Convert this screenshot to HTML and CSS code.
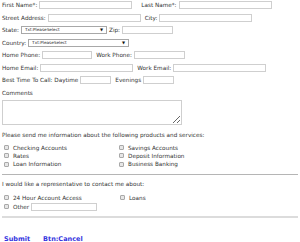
FILE: index.html
```html
<!DOCTYPE html>
<html lang="en">
<head>
  <meta charset="UTF-8">
  <title>Contact Request</title>
  <link rel="stylesheet" href="styles.css">
</head>
<body>
  <form class="contact-form">
    <!-- Name -->
    <div class="row">
      <label>First Name*:</label>
      <input type="text" class="field w-93">
      <label class="next far">Last Name*:</label>
      <input type="text" class="field w-93">
    </div>

    <!-- Address -->
    <div class="row">
      <label>Street Address:</label>
      <input type="text" class="field w-93">
      <label class="next">City:</label>
      <input type="text" class="field w-93">
    </div>

    <div class="row">
      <label>State:</label>
      <span class="select w-86">
        <select class="picker"><option>Txt:PleaseSelect</option></select>
      </span>
      <label class="near">Zip:</label>
      <input type="text" class="field w-51">
    </div>

    <div class="row">
      <label>Country:</label>
      <span class="select w-101">
        <select class="picker"><option>Txt:PleaseSelect</option></select>
      </span>
    </div>

    <!-- Phone / Email -->
    <div class="row">
      <label>Home Phone:</label>
      <input type="text" class="field w-50">
      <label class="next">Work Phone:</label>
      <input type="text" class="field w-51">
    </div>

    <div class="row">
      <label>Home Email:</label>
      <input type="text" class="field w-93">
      <label class="next">Work Email:</label>
      <input type="text" class="field w-93">
    </div>

    <div class="row">
      <label>Best Time To Call: Daytime</label>
      <input type="text" class="field w-31">
      <label class="next">Evenings</label>
      <input type="text" class="field w-31">
    </div>

    <div class="row">
      <label>Comments</label>
    </div>
    <textarea class="comments"></textarea>

    <!-- Products -->
    <p class="question">Please send me information about the following products and services:</p>
    <div class="options">
      <label class="option"><input type="checkbox"> Checking Accounts</label>
      <label class="option"><input type="checkbox"> Savings Accounts</label>
      <label class="option"><input type="checkbox"> Rates</label>
      <label class="option"><input type="checkbox"> Deposit Information</label>
      <label class="option"><input type="checkbox"> Loan Information</label>
      <label class="option"><input type="checkbox"> Business Banking</label>
    </div>

    <hr class="divider">

    <!-- Representative -->
    <p class="question">I would like a representative to contact me about:</p>
    <div class="options contact">
      <label class="option"><input type="checkbox"> 24 Hour Account Access</label>
      <label class="option"><input type="checkbox"> Loans</label>
      <label class="option other"><input type="checkbox"> Other <input type="text" class="field w-66"></label>
    </div>

    <hr class="divider light">

    <div class="actions">
      <a href="#" class="action">Submit</a>
      <a href="#" class="action">Btn:Cancel</a>
    </div>
  </form>
</body>
</html>
```

FILE: styles.css
```css
/* Base */
body {
  margin: 0;
  padding: 0 2px;
  font-family: "DejaVu Sans", Verdana, sans-serif;
  font-size: 5.7px;
  color: #333;
  background: #fff;
}

.contact-form {
  display: flex;
  flex-direction: column;
}

/* Rows */
.row {
  display: flex;
  align-items: center;
  height: 10px;
  margin-top: 2.5px;
  white-space: nowrap;
}

.row:first-child {
  margin-top: 0;
}

.row label {
  margin-right: 2px;
}

.row .next {
  margin-left: 4px;
}

.row .far {
  margin-left: 9px;
}

.row .near {
  margin-left: 2px;
}

/* Inputs */
.field {
  box-sizing: border-box;
  height: 8px;
  padding: 0;
  margin: 0;
  border: 1px solid #cfcfcf;
  background: #fff;
}

.w-93 { width: 93px; }
.w-86 { width: 86px; }
.w-101 { width: 101px; }
.w-51 { width: 51px; }
.w-50 { width: 50px; }
.w-31 { width: 31px; }
.w-66 { width: 66px; }

/* Select with drawn arrow */
.select {
  position: relative;
  display: block;
  height: 8px;
}

.select::after {
  content: "\25BC";
  position: absolute;
  right: 4px;
  top: 2px;
  font-size: 4px;
  line-height: 4px;
  color: #111;
  pointer-events: none;
}

.picker {
  appearance: none;
  display: block;
  box-sizing: border-box;
  width: 100%;
  height: 8px;
  padding: 0 3px;
  margin: 0;
  border: 1px solid #a8a8a8;
  border-radius: 0;
  background: #fff;
  font-family: "DejaVu Sans", Verdana, sans-serif;
  font-size: 4.2px;
  line-height: 6px;
  color: #222;
}

.comments {
  box-sizing: border-box;
  width: 180px;
  height: 25px;
  margin: 2.5px 0 0;
  padding: 0;
  border: 1px solid #cfcfcf;
}

/* Checkbox groups */
.question {
  margin: 6.5px 0 0;
  line-height: 7px;
}

.options {
  display: grid;
  grid-template-columns: 115px 1fr;
  grid-auto-rows: 8.3px;
  align-items: center;
  margin-top: 5px;
  padding-left: 2px;
}

.options.contact {
  grid-template-columns: 116px 1fr;
  grid-auto-rows: 9.4px;
}

.option {
  display: flex;
  align-items: center;
  white-space: nowrap;
}

.option input[type="checkbox"] {
  appearance: none;
  box-sizing: border-box;
  width: 5px;
  height: 5px;
  margin: 0 4px 0 0;
  border: 1px solid #a9a9a9;
  border-radius: 1px;
  background: #e6e6e6;
}

.option .field {
  margin-left: 2px;
}

.divider {
  width: 100%;
  margin: 5.5px 0 0;
  border: 0;
  border-top: 1px solid #b5b5b5;
}

.divider.light {
  margin-top: 4px;
  border-top: 2px solid #dcdcdc;
}

.divider + .question {
  margin-top: 6px;
}

/* Actions */
.actions {
  display: flex;
  gap: 13px;
  margin-top: 17px;
  padding-left: 2px;
}

.action {
  font-size: 6.5px;
  font-weight: bold;
  color: #3434e0;
  text-decoration: none;
}
```
